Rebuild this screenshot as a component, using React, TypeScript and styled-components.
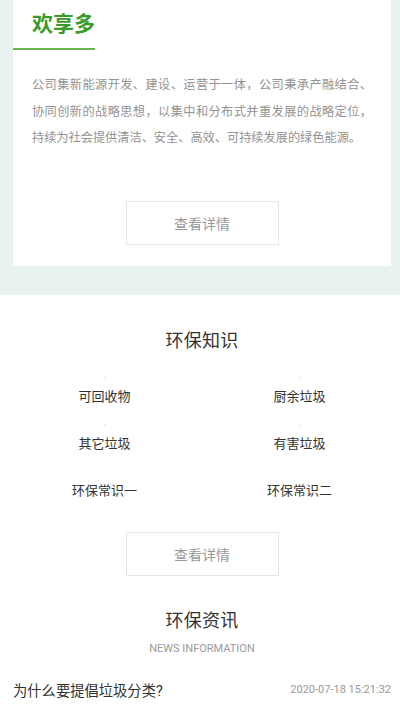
import React from "react";
import styled, { createGlobalStyle } from "styled-components";

const Global = createGlobalStyle`
  html, body { margin: 0; padding: 0; background: #fff; }
  body { font-family: "Roboto", "Noto Sans CJK SC", sans-serif; }
  * { box-sizing: border-box; }
`;

const Page = styled.div`
  width: 400px;
  display: flex;
  flex-direction: column;
`;

const MintBand = styled.section`
  background: #e8f3f1;
  padding: 0 9px 29px 13px;
`;

const Card = styled.div`
  background: #fff;
  display: flex;
  flex-direction: column;
  padding-bottom: 21px;
`;

const BrandHeading = styled.h1`
  align-self: flex-start;
  margin: 0;
  padding: 11px 0 10px 19px;
  width: 82px;
  font-size: 21px;
  line-height: 27px;
  font-weight: 700;
  color: #3a9b2a;
  white-space: nowrap;
  border-bottom: 2px solid #67b552;
`;

const Intro = styled.p`
  margin: 22px 19px 0 19px;
  font-size: 12.2px;
  line-height: 26.5px;
  color: #939393;
  text-align: justify;
`;

const DetailButton = styled.button<{ $top: number }>`
  align-self: center;
  margin-top: ${(p) => p.$top}px;
  width: 153px;
  height: 44px;
  background: #fff;
  border: 1px solid #e6e6e6;
  font-family: "Roboto", "Noto Sans CJK SC", sans-serif;
  font-size: 14px;
  color: #9a9a9a;
  cursor: pointer;
  padding: 0;
`;

const Knowledge = styled.section`
  display: flex;
  flex-direction: column;
  padding: 34px 9px 0 13px;
  align-items: center;
`;

const SectionTitle = styled.h2<{ $top?: number }>`
  margin: ${(p) => p.$top ?? 0}px 0 0 0;
  font-size: 18px;
  line-height: 24px;
  font-weight: 400;
  color: #333;
  letter-spacing: 0.3px;
`;

const SubTitle = styled.div`
  margin-top: 8px;
  font-family: "Roboto", sans-serif;
  font-size: 11px;
  line-height: 16px;
  color: #9a9a9a;
`;

const Grid = styled.div`
  margin-top: 24px;
  display: grid;
  grid-template-columns: 160px 160px;
  column-gap: 35px;
  row-gap: 18px;
`;

const Item = styled.div`
  display: flex;
  flex-direction: column;
  align-items: center;
`;

const IconDot = styled.span`
  width: 2px;
  height: 2px;
  border-radius: 50%;
  background: #ececec;
  margin-bottom: 9px;
`;

const ItemLabel = styled.span`
  font-size: 13px;
  line-height: 18px;
  color: #333;
`;

const NewsRow = styled.div`
  align-self: stretch;
  margin-top: 23px;
  display: flex;
  justify-content: space-between;
  align-items: center;
  height: 20px;
`;

const NewsTitle = styled.span`
  font-size: 14.3px;
  color: #333;
`;

const NewsDate = styled.span`
  font-family: "Roboto", sans-serif;
  font-size: 11px;
  color: #9a9a9a;
`;

const items = ["可回收物", "厨余垃圾", "其它垃圾", "有害垃圾", "环保常识一", "环保常识二"];

export default function App() {
  return (
    <Page>
      <Global />
      <MintBand>
        <Card>
          <BrandHeading>欢享多</BrandHeading>
          <Intro>
            公司集新能源开发、建设、运营于一体，公司秉承产融结合、协同创新的战略思想，以集中和分布式并重发展的战略定位，持续为社会提供清洁、安全、高效、可持续发展的绿色能源。
          </Intro>
          <DetailButton $top={49}>查看详情</DetailButton>
        </Card>
      </MintBand>
      <Knowledge>
        <SectionTitle>环保知识</SectionTitle>
        <Grid>
          {items.map((t) => (
            <Item key={t}>
              <IconDot />
              <ItemLabel>{t}</ItemLabel>
            </Item>
          ))}
        </Grid>
        <DetailButton $top={32}>查看详情</DetailButton>
        <SectionTitle $top={33}>环保资讯</SectionTitle>
        <SubTitle>NEWS INFORMATION</SubTitle>
        <NewsRow>
          <NewsTitle>为什么要提倡垃圾分类?</NewsTitle>
          <NewsDate>2020-07-18 15:21:32</NewsDate>
        </NewsRow>
      </Knowledge>
    </Page>
  );
}
